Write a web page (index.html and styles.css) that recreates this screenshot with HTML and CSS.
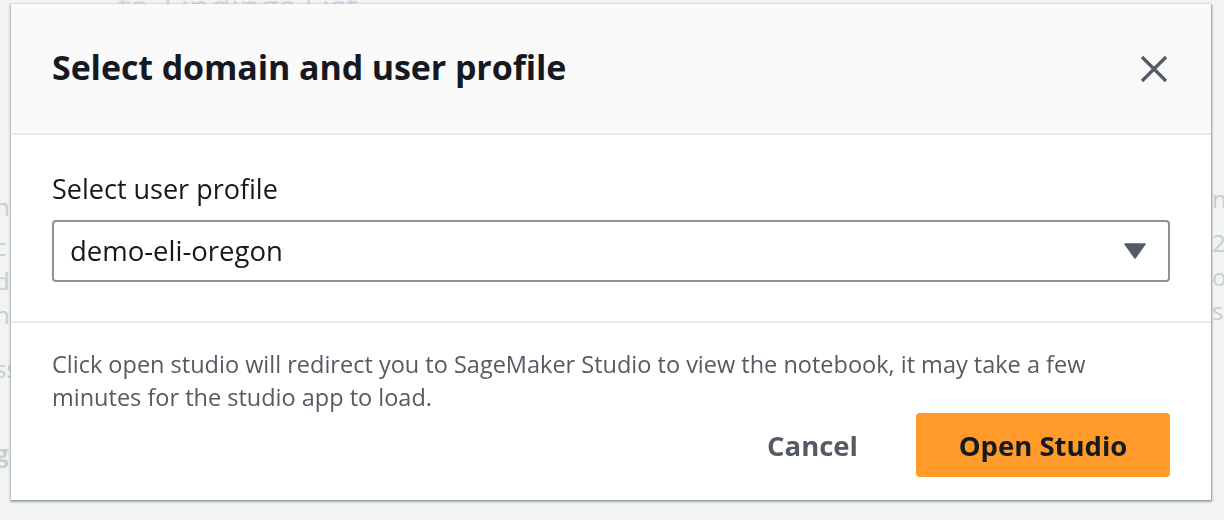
FILE: index.html
```html
<!DOCTYPE html>
<html lang="en">
<head>
<meta charset="utf-8">
<title>Select domain and user profile</title>
<link rel="stylesheet" href="styles.css">
</head>
<body>
<div class="page">
  <div class="page-top"><span class="crumb">ta</span><span class="crumb-link">Findings List</span></div>
  <div class="page-cols">
    <div class="col col-left">
      <p class="line l1">n</p>
      <p class="line l2">c</p>
      <p class="line">d</p>
      <p class="line">h</p>
      <p class="line l5">ss</p>
      <p class="line l6">g</p>
    </div>
    <div class="col col-right">
      <p class="line r1">n</p>
      <p class="line r2">20</p>
      <p class="line">ot</p>
      <p class="line">s</p>
    </div>
  </div>
</div>

<div class="overlay">
  <div class="modal" role="dialog" aria-labelledby="modal-title">
    <div class="modal-header">
      <h2 id="modal-title" class="modal-title">Select domain and user profile</h2>
      <button class="close-btn" aria-label="Close">
        <svg width="28" height="28" viewBox="0 0 28 28" aria-hidden="true">
          <path d="M2 2 L26 26 M26 2 L2 26" stroke="#545b64" stroke-width="3.2" stroke-linecap="butt" fill="none"/>
        </svg>
      </button>
    </div>
    <div class="modal-body">
      <label class="field-label" for="profile">Select user profile</label>
      <div class="select" id="profile">
        <span class="select-value">demo-eli-oregon</span>
        <svg class="caret" width="22" height="16" viewBox="0 0 22 16" aria-hidden="true">
          <path d="M1 1 H21 L11 15 Z" fill="#545b64" stroke="#545b64" stroke-width="1.5" stroke-linejoin="round"/>
        </svg>
      </div>
    </div>
    <div class="modal-footer">
      <p class="note">Click open studio will redirect you to SageMaker Studio to view the notebook, it may take a few minutes for the studio app to load.</p>
      <div class="actions">
        <button class="btn btn-link">Cancel</button>
        <button class="btn btn-primary">Open Studio</button>
      </div>
    </div>
  </div>
</div>
</body>
</html>
```

FILE: styles.css
```css
* { box-sizing: border-box; }

html, body {
  margin: 0;
  padding: 0;
  width: 1224px;
  height: 520px;
  overflow: hidden;
}

body {
  background: #f2f3f3;
  font-family: "Open Sans", "Noto Sans", "Liberation Sans", sans-serif;
  color: #16191f;
}

/* background page (dimmed behind modal) */
.page {
  height: 520px;
  overflow: hidden;
}

.page-top {
  height: 6px;
  overflow: hidden;
  display: flex;
  gap: 14px;
  padding-left: 118px;
  font-size: 34px;
  line-height: 14px;
  color: #d9dcdc;
}

.crumb-link { color: #cfdbe8; }

.page-cols {
  display: flex;
  justify-content: space-between;
  padding-top: 172px;
}

.col { font-size: 24px; color: #c9cdcd; }
.col-left { margin-left: -5px; }
.col-right { margin-right: -6px; width: 18px; }

.line {
  margin: 0;
  height: 34px;
  line-height: 34px;
}
.l1 { margin-top: 12px; }
.l2 { margin-top: 6px; }
.l5 { margin-top: 20px; }
.l6 { margin-top: 50px; font-weight: 700; }
.r1 { margin-top: 4px; }
.r2 { margin-top: 10px; }

/* overlay + modal */
.overlay {
  position: fixed;
  inset: 0;
  padding: 4px 13px 0 11px;
}

.modal {
  width: 1200px;
  height: 496px;
  background: #ffffff;
  box-shadow: 0 1px 2px 1px rgba(0, 28, 36, 0.3), 1px 1px 1px 0 rgba(0, 28, 36, 0.15);
  display: flex;
  flex-direction: column;
}

.modal-header {
  height: 131px;
  background: #fafafa;
  border-bottom: 2px solid #eaeded;
  display: flex;
  align-items: center;
  justify-content: space-between;
  padding: 0 43px 0 41px;
}

.modal-title {
  margin: 0;
  font-size: 34px;
  font-weight: 700;
  line-height: 44px;
  color: #16191f;
  padding-bottom: 4px;
  letter-spacing: -0.1px;
}

.close-btn {
  border: 0;
  background: transparent;
  padding: 0;
  width: 28px;
  height: 28px;
  display: flex;
  align-items: center;
  justify-content: center;
  cursor: pointer;
}

.modal-body {
  padding: 33px 41px 39px;
  border-bottom: 2px solid #eaeded;
  display: flex;
  flex-direction: column;
  gap: 10px;
}

.field-label {
  font-size: 27px;
  line-height: 42px;
  color: #16191f;
}

.select {
  height: 62px;
  border: 2px solid #879596;
  border-radius: 4px;
  display: flex;
  align-items: center;
  justify-content: space-between;
  padding: 0 22px 0 16px;
}

.select-value {
  font-size: 27.5px;
  color: #16191f;
  padding-bottom: 2px;
}

.modal-footer {
  padding: 25px 41px 0;
  display: flex;
  flex-direction: column;
}

.note {
  margin: 0;
  font-size: 23.5px;
  line-height: 33px;
  color: #545b64;
}

.actions {
  display: flex;
  justify-content: flex-end;
  align-items: center;
  gap: 30px;
  margin-top: -1px;
}

.btn {
  font-family: inherit;
  font-size: 27.5px;
  font-weight: 700;
  border: 0;
  cursor: pointer;
  height: 64px;
  border-radius: 4px;
}

.btn-link {
  background: transparent;
  color: #545b64;
  padding: 0 28px;
}

.btn-primary {
  width: 254px;
  background: #ff9a2b;
  color: #16191f;
}
```
